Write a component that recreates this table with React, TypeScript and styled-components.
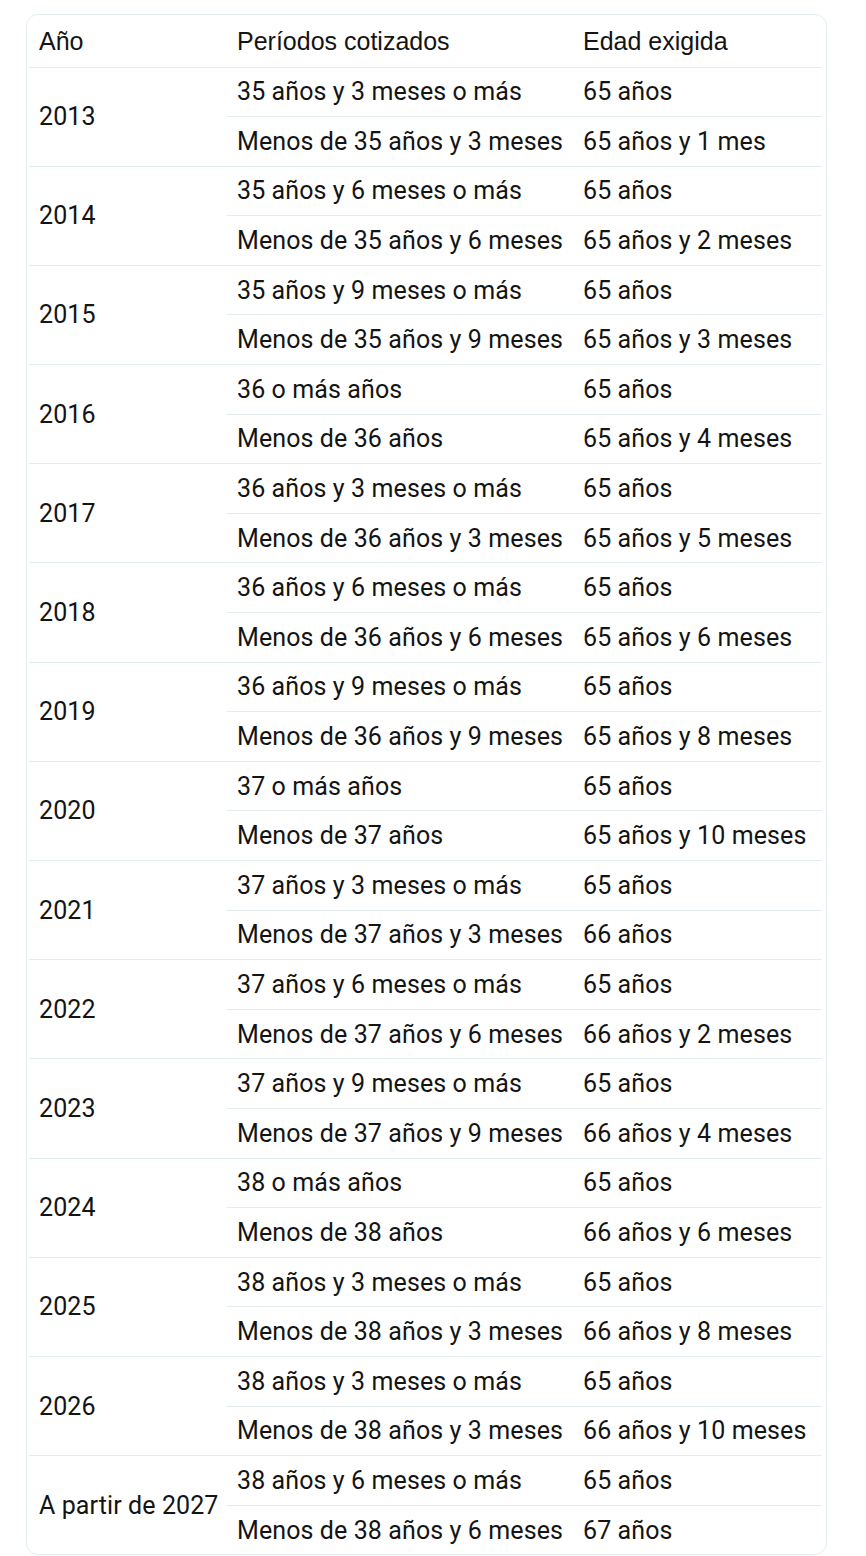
import React from "react";
import styled, { createGlobalStyle } from "styled-components";

const Global = createGlobalStyle`
  html, body { margin: 0; padding: 0; background: #ffffff; }
  body { font-family: Roboto, "Liberation Sans", Arial, sans-serif; color: #141414; }
`;

const Page = styled.div`
  padding: 14px 39px 0 26px;
`;

const Card = styled.div`
  border: 1px solid #e4eef0;
  border-radius: 12px;
  padding: 0 4px 0 2px;
  background: #fff;
`;

const Table = styled.table`
  width: 100%;
  border-collapse: collapse;
  table-layout: fixed;
  font-size: 25px;
`;

const Th = styled.th<{ $w: number }>`
  box-sizing: border-box;
  width: ${(p) => p.$w}px;
  text-align: left;
  font-family: "Liberation Sans", Arial, sans-serif;
  font-weight: 400;
  padding: 2px 10px 0;
  height: 52px;
  border-bottom: 1px solid #e4eef0;
  white-space: nowrap;
`;

const Td = styled.td<{ $last?: boolean }>`
  padding: 1px 10px 0;
  height: 47.6px;
  line-height: 28px;
  letter-spacing: 0.1px;
  vertical-align: middle;
  white-space: nowrap;
  border-bottom: ${(p) => (p.$last ? "none" : "1px solid #e4eef0")};
`;

type Group = { year: string; rows: [string, string][] };

const data: Group[] = [
  { year: "2013", rows: [["35 años y 3 meses o más", "65 años"], ["Menos de 35 años y 3 meses", "65 años y 1 mes"]] },
  { year: "2014", rows: [["35 años y 6 meses o más", "65 años"], ["Menos de 35 años y 6 meses", "65 años y 2 meses"]] },
  { year: "2015", rows: [["35 años y 9 meses o más", "65 años"], ["Menos de 35 años y 9 meses", "65 años y 3 meses"]] },
  { year: "2016", rows: [["36 o más años", "65 años"], ["Menos de 36 años", "65 años y 4 meses"]] },
  { year: "2017", rows: [["36 años y 3 meses o más", "65 años"], ["Menos de 36 años y 3 meses", "65 años y 5 meses"]] },
  { year: "2018", rows: [["36 años y 6 meses o más", "65 años"], ["Menos de 36 años y 6 meses", "65 años y 6 meses"]] },
  { year: "2019", rows: [["36 años y 9 meses o más", "65 años"], ["Menos de 36 años y 9 meses", "65 años y 8 meses"]] },
  { year: "2020", rows: [["37 o más años", "65 años"], ["Menos de 37 años", "65 años y 10 meses"]] },
  { year: "2021", rows: [["37 años y 3 meses o más", "65 años"], ["Menos de 37 años y 3 meses", "66 años"]] },
  { year: "2022", rows: [["37 años y 6 meses o más", "65 años"], ["Menos de 37 años y 6 meses", "66 años y 2 meses"]] },
  { year: "2023", rows: [["37 años y 9 meses o más", "65 años"], ["Menos de 37 años y 9 meses", "66 años y 4 meses"]] },
  { year: "2024", rows: [["38 o más años", "65 años"], ["Menos de 38 años", "66 años y 6 meses"]] },
  { year: "2025", rows: [["38 años y 3 meses o más", "65 años"], ["Menos de 38 años y 3 meses", "66 años y 8 meses"]] },
  { year: "2026", rows: [["38 años y 3 meses o más", "65 años"], ["Menos de 38 años y 3 meses", "66 años y 10 meses"]] },
  { year: "A partir de 2027", rows: [["38 años y 6 meses o más", "65 años"], ["Menos de 38 años y 6 meses", "67 años"]] },
];

export default function App() {
  return (
    <>
      <Global />
      <Page>
        <Card>
          <Table>
            <thead>
              <tr>
                <Th $w={198}>Año</Th>
                <Th $w={346}>Períodos cotizados</Th>
                <Th $w={249}>Edad exigida</Th>
              </tr>
            </thead>
            <tbody>
              {data.map((g, gi) => {
                const lastGroup = gi === data.length - 1;
                return g.rows.map((r, ri) => {
                  const last = lastGroup && ri === g.rows.length - 1;
                  return (
                    <tr key={`${gi}-${ri}`}>
                      {ri === 0 && (
                        <Td rowSpan={2} $last={lastGroup}>
                          {g.year}
                        </Td>
                      )}
                      <Td $last={last}>{r[0]}</Td>
                      <Td $last={last}>{r[1]}</Td>
                    </tr>
                  );
                });
              })}
            </tbody>
          </Table>
        </Card>
      </Page>
    </>
  );
}
